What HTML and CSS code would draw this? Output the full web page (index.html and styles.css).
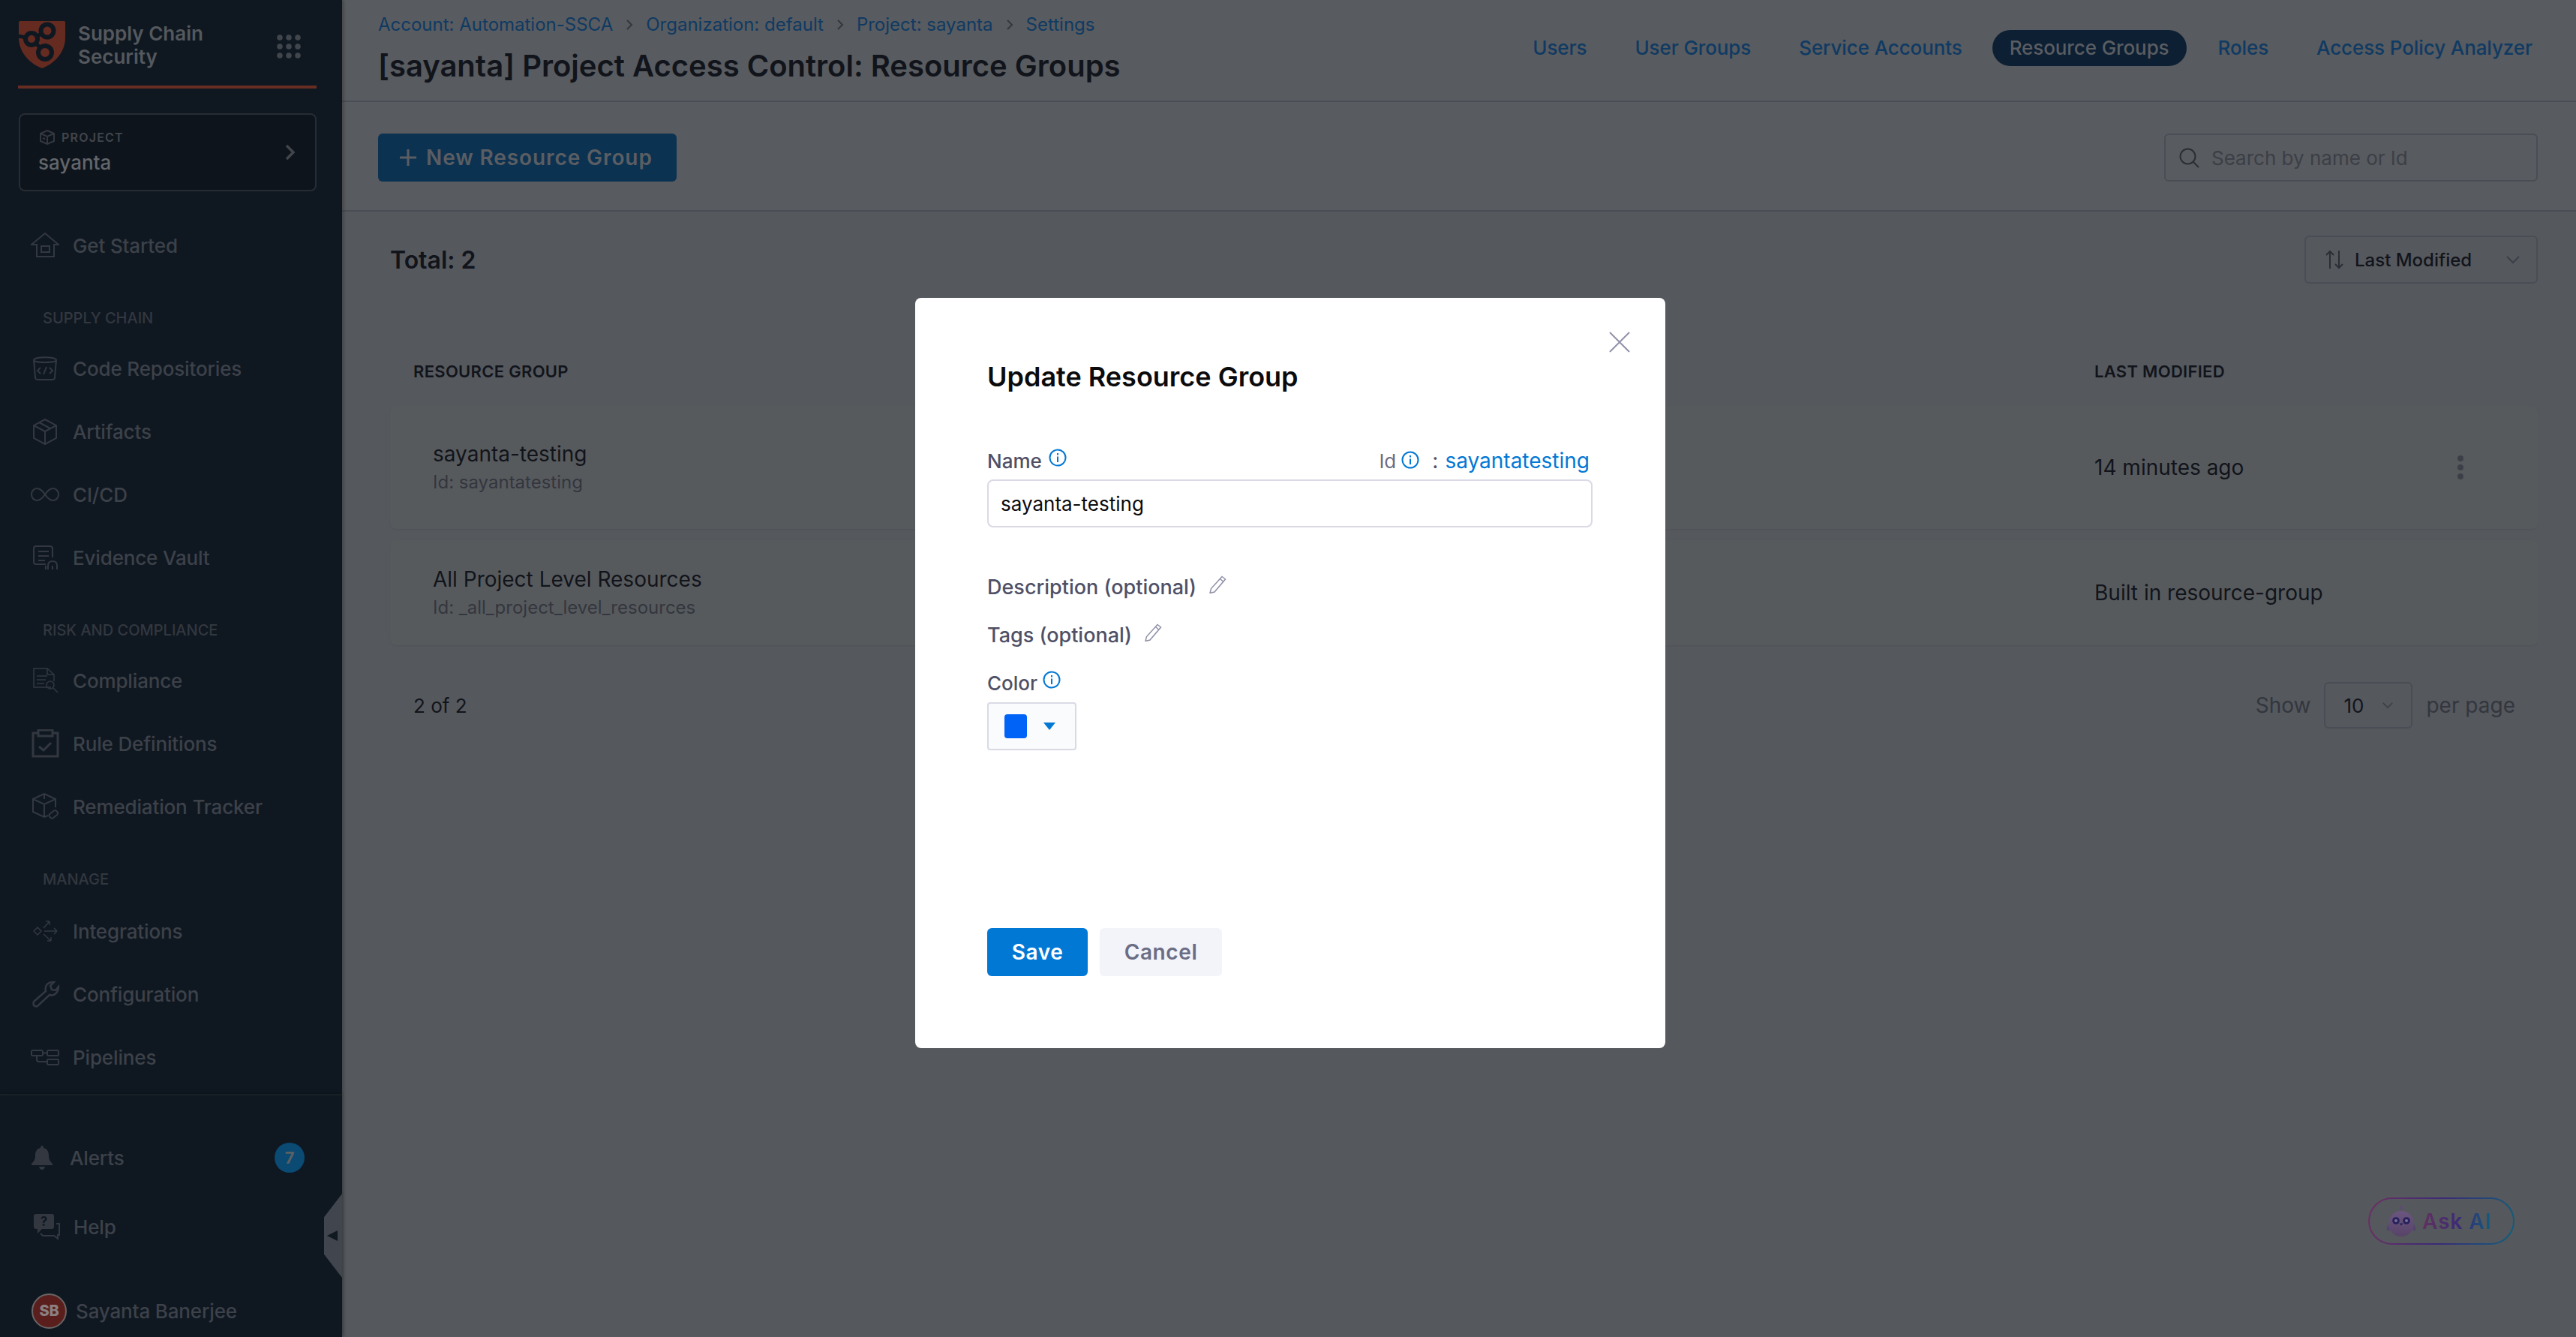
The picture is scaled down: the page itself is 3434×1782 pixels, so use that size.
FILE: index.html
```html
<!DOCTYPE html>
<html lang="en">
<head>
<meta charset="utf-8">
<title>Project Access Control: Resource Groups</title>
<link rel="stylesheet" href="styles.css">
</head>
<body>
<div class="app">
  <aside class="sidebar">
    <div class="brand">
      <svg class="logo" width="64" height="66" viewBox="25 27 64 66">
        <path class="logo-shield" d="M27 28H85Q87 28 87 30V50C87 70 72 85 56 91C40 85 25 70 25 50V30Q25 28 27 28Z"/>
        <path class="logo-line" d="M25 48L42 52M42 52L63 41M42 52L60 70"/>
        <circle class="logo-node" cx="63" cy="41" r="8.5"/>
        <circle class="logo-node" cx="42" cy="52" r="8"/>
        <circle class="logo-node" cx="60" cy="70" r="9"/>
      </svg>
      <div class="brand-name">Supply Chain<br>Security</div>
      <svg class="brand-grid" width="32" height="32" viewBox="0 0 32 32">
        <circle cx="4" cy="4" r="3.8"/><circle cx="16" cy="4" r="3.8"/><circle cx="28" cy="4" r="3.8"/>
        <circle cx="4" cy="16" r="3.8"/><circle cx="16" cy="16" r="3.8"/><circle cx="28" cy="16" r="3.8"/>
        <circle cx="4" cy="28" r="3.8"/><circle cx="16" cy="28" r="3.8"/><circle cx="28" cy="28" r="3.8"/>
      </svg>
    </div>
    <div class="project">
      <div class="project-text">
        <div class="project-label">
          <svg class="ico-line" width="20" height="20" viewBox="0 0 20 20"><path d="M10 1L19 5V15L10 19L1 15V5ZM1 5L10 9L19 5M10 9V19M4 11L7 12.5"/></svg>
          <span>PROJECT</span>
        </div>
        <div class="project-name">sayanta</div>
      </div>
      <svg class="project-arrow" width="14" height="22" viewBox="0 0 14 22"><path d="M2 2L11 11L2 20"/></svg>
    </div>
    <nav class="nav">
      <a class="nav-item"><svg class="ico-line" width="38" height="38" viewBox="0 0 38 38"><path d="M19 3L37 18H31V34H8V18H1ZM14 20H25V28H14Z"/></svg><span>Get Started</span></a>
      <div class="nav-heading">SUPPLY CHAIN</div>
      <a class="nav-item"><svg class="ico-line" width="38" height="38" viewBox="0 0 38 38"><path d="M4 8C4 3 34 3 34 8C34 12 4 12 4 8ZM4 8L6 31Q6 34 10 34H28Q32 34 32 31L34 8M13 18L9 22L13 26M25 18L29 22L25 26M21 17L17 27"/></svg><span>Code Repositories</span></a>
      <a class="nav-item"><svg class="ico-line" width="38" height="38" viewBox="0 0 38 38"><path d="M19 3L34 11V28L19 36L4 28V11ZM4 11L19 19L34 11M19 19V36M11 7L26 15"/></svg><span>Artifacts</span></a>
      <a class="nav-item"><svg class="ico-line" width="38" height="38" viewBox="0 0 38 38"><path d="M19 19C15 13 11 11 8 11C4 11 1 15 1 19C1 23 4 27 8 27C11 27 15 25 19 19C23 13 27 11 30 11C34 11 37 15 37 19C37 23 34 27 30 27C27 27 23 25 19 19Z"/></svg><span>CI/CD</span></a>
      <a class="nav-item"><svg class="ico-line" width="38" height="38" viewBox="0 0 38 38"><path d="M20 28H7Q4 28 4 25V7Q4 4 7 4H25Q29 4 29 7V19M10 11H24M10 17H24M10 23H19M23 35V30Q23 24 29 24Q35 24 35 30V35M29 30V35M20 30V35"/></svg><span>Evidence Vault</span></a>
      <div class="nav-heading">RISK AND COMPLIANCE</div>
      <a class="nav-item"><svg class="ico-line ico-thin" width="38" height="38" viewBox="0 0 38 38"><path d="M27 28H4V3H22L31 11V20M22 3V11H31M8 13H22M8 18H20M8 23H18"/><circle cx="26" cy="25" r="5"/><path d="M30 29L36 35"/></svg><span>Compliance</span></a>
      <a class="nav-item"><svg class="ico-thick" width="38" height="38" viewBox="0 0 38 38"><path d="M10 5H3V36H36V5H29M10 1H29V9H10ZM11 23L17 28L27 18"/></svg><span>Rule Definitions</span></a>
      <a class="nav-item"><svg class="ico-line" width="38" height="38" viewBox="0 0 38 38"><path d="M18 2L33 9V20M18 2L3 9V26L18 33L23 31M3 9L18 16L33 9M18 16V33M18 2V9"/><rect x="24" y="26" width="12" height="7" rx="3" transform="rotate(-38 30 29)"/></svg><span>Remediation Tracker</span></a>
      <div class="nav-heading nav-heading-last">MANAGE</div>
      <a class="nav-item"><svg class="ico-line ico-thin" width="38" height="38" viewBox="0 0 38 38"><path d="M6 14L11 19L6 24L1 19ZM14 15L22 6M22 6H17M22 6V11M15 19H32M32 19L28 15M32 19L28 23M14 23L24 32M24 32V27M24 32H19" transform="translate(3 0)"/></svg><span>Integrations</span></a>
      <a class="nav-item"><svg class="ico-line ico-wide" width="38" height="38" viewBox="0 0 38 38"><path d="M4 29L20 15C18 8 23 2 31 3L26 8L28 13L33 14L37 9C37 17 31 22 25 20L9 35Q6 36 4 34Q3 31 4 29Z"/></svg><span>Configuration</span></a>
      <a class="nav-item"><svg class="ico-line" width="38" height="38" viewBox="0 0 38 38"><rect x="1" y="10" width="15" height="7" rx="1.5"/><rect x="22" y="10" width="15" height="7" rx="1.5"/><rect x="22" y="22" width="15" height="7" rx="1.5"/><path d="M16 13.500H22M8 17V22Q8 25 11 25H22"/></svg><span>Pipelines</span></a>
    </nav>
    <div class="side-foot">
      <a class="foot-item foot-alerts">
        <svg class="ico-fill" width="28" height="32" viewBox="0 0 28 32"><path d="M14 0Q16 0 16 3C21 4 23 8 23 13C23 19 25 21 28 24V26H0V24C3 21 5 19 5 13C5 8 7 4 12 3Q12 0 14 0ZM10 28H18Q17 32 14 32Q11 32 10 28Z"/></svg>
        <span>Alerts</span>
        <b class="badge">7</b>
      </a>
      <a class="foot-item foot-help">
        <svg class="ico-fill ico-help" width="36" height="34" viewBox="0 0 36 34"><path d="M3 0H24Q27 0 27 3V17Q27 20 24 20H11L5 26V20H3Q0 20 0 17V3Q0 0 3 0Z"/><path class="help-outline" d="M30 13H34V28H32V33L27 29H12L9 26"/><text class="help-q" x="13.500" y="16" text-anchor="middle">?</text></svg>
        <span>Help</span>
      </a>
      <a class="foot-item foot-user">
        <span class="avatar">SB</span>
        <span>Sayanta Banerjee</span>
      </a>
    </div>
    <div class="collapse"><span class="collapse-arrow"></span></div>
  </aside>

  <main class="main">
    <header class="topbar">
      <div class="topbar-left">
        <div class="crumbs">
          <a>Account: Automation-SSCA</a><svg class="crumb-sep" width="10" height="16" viewBox="0 0 10 16"><path d="M2 2L8 8L2 14"/></svg>
          <a>Organization: default</a><svg class="crumb-sep" width="10" height="16" viewBox="0 0 10 16"><path d="M2 2L8 8L2 14"/></svg>
          <a>Project: sayanta</a><svg class="crumb-sep" width="10" height="16" viewBox="0 0 10 16"><path d="M2 2L8 8L2 14"/></svg>
          <a>Settings</a>
        </div>
        <h1 class="page-title">[sayanta] Project Access Control: Resource Groups</h1>
      </div>
      <nav class="tabs">
        <a class="tab">Users</a>
        <a class="tab">User Groups</a>
        <a class="tab">Service Accounts</a>
        <a class="tab tab-active">Resource Groups</a>
        <a class="tab">Roles</a>
        <a class="tab">Access Policy Analyzer</a>
      </nav>
    </header>

    <section class="toolbar">
      <button class="btn-new"><svg width="24" height="24" viewBox="0 0 24 24"><path d="M12 1V23M1 12H23"/></svg>New Resource Group</button>
      <div class="search">
        <svg width="28" height="28" viewBox="0 0 28 28"><circle cx="12.500" cy="12.500" r="10"/><path d="M20 20L27 27"/></svg>
        <span>Search by name or Id</span>
      </div>
    </section>

    <section class="content">
      <div class="total-row">
        <div class="total">Total: 2</div>
        <div class="sort">
          <svg class="sort-ico" width="26" height="26" viewBox="0 0 26 26"><path d="M7 25V2M2 7L7 2L12 7M19 1V24M14 19L19 24L24 19"/></svg>
          <span class="sort-text">Last Modified</span>
          <svg class="chev" width="18" height="12" viewBox="0 0 18 12"><path d="M1 2L9 10L17 2"/></svg>
        </div>
      </div>
      <div class="thead">
        <div>RESOURCE GROUP</div>
        <div>LAST MODIFIED</div>
      </div>
      <div class="row row-tall">
        <div class="row-name">
          <div class="rg-name">sayanta-testing</div>
          <div class="rg-id">Id: sayantatesting</div>
        </div>
        <div class="row-last">
          <span>14 minutes ago</span>
          <svg class="kebab" width="8" height="32" viewBox="0 0 8 32"><circle cx="4" cy="4" r="4"/><circle cx="4" cy="16" r="4"/><circle cx="4" cy="28" r="4"/></svg>
        </div>
      </div>
      <div class="row">
        <div class="row-name">
          <div class="rg-name">All Project Level Resources</div>
          <div class="rg-id">Id: _all_project_level_resources</div>
        </div>
        <div class="row-last"><span>Built in resource-group</span></div>
      </div>
      <div class="pager">
        <div class="pager-count">2 of 2</div>
        <div class="pager-size">
          <span>Show</span>
          <div class="size-select"><b>10</b><svg class="chev" width="18" height="12" viewBox="0 0 18 12"><path d="M1 2L9 10L17 2"/></svg></div>
          <span>per page</span>
        </div>
      </div>
      <div class="ask-wrap">
        <div class="ask">
          <svg width="40" height="42" viewBox="0 0 40 42">
            <defs><linearGradient id="botfill" x1="0" y1="0" x2="0" y2="1"><stop offset="0" stop-color="#6b5680"/><stop offset="1" stop-color="#584368"/></linearGradient></defs>
            <path class="bot-wing" d="M3 25Q0 30 1 33H8V21ZM37 25Q40 30 39 33H32V21Z"/>
            <circle class="bot-ant" cx="20" cy="2.500" r="2"/><path class="bot-antline" d="M20 3V8"/>
            <circle cx="20" cy="24" r="17" fill="url(#botfill)"/>
            <circle class="bot-eye" cx="13" cy="20" r="4.800"/><circle class="bot-eye" cx="27" cy="20" r="4.800"/>
            <circle class="bot-pupil" cx="13" cy="20" r="2"/><circle class="bot-pupil" cx="27" cy="20" r="2"/>
            <path class="bot-eye" d="M17.500 23.500H22.500L20 26.500Z"/>
          </svg>
          <span class="ask-text">Ask AI</span>
        </div>
      </div>
    </section>
  </main>
</div>

<div class="backdrop">
  <div class="modal">
    <svg class="modal-close" width="28" height="28" viewBox="0 0 28 28"><path d="M1 1L27 27M27 1L1 27"/></svg>
    <h2 class="modal-title">Update Resource Group</h2>
    <div class="name-row">
      <div class="field-label">Name
        <svg class="info info-up" width="24" height="24" viewBox="0 0 24 24"><circle cx="12" cy="12" r="10.500"/><path d="M12 10.500V18M12 6V8.500"/></svg>
      </div>
      <div class="id-block">
        <span class="id-label">Id</span>
        <svg class="info" width="24" height="24" viewBox="0 0 24 24"><circle cx="12" cy="12" r="10.500"/><path d="M12 10.500V18M12 6V8.500"/></svg>
        <span class="id-colon">:</span>
        <span class="id-value">sayantatesting</span>
      </div>
    </div>
    <div class="name-input">sayanta-testing</div>
    <div class="opt-row">Description (optional)
      <svg class="pencil" width="24" height="24" viewBox="0 0 24 24"><path d="M18 1.500L22.500 5L8 22L2 23.500L3.500 17.500ZM15.500 4.500L20 8.500"/></svg>
    </div>
    <div class="opt-row">Tags (optional)
      <svg class="pencil" width="24" height="24" viewBox="0 0 24 24"><path d="M18 1.500L22.500 5L8 22L2 23.500L3.500 17.500ZM15.500 4.500L20 8.500"/></svg>
    </div>
    <div class="opt-row color-row">Color
      <svg class="info info-up" width="24" height="24" viewBox="0 0 24 24"><circle cx="12" cy="12" r="10.500"/><path d="M12 10.500V18M12 6V8.500"/></svg>
    </div>
    <div class="color-btn"><span class="swatch"></span><span class="caret"></span></div>
    <div class="modal-actions">
      <button class="btn-save">Save</button>
      <button class="btn-cancel">Cancel</button>
    </div>
  </div>
</div>
</body>
</html>
```
FILE: styles.css
```css
* { box-sizing: border-box; }
html, body { margin: 0; height: 100%; }
body {
  font-family: Inter, "Noto Sans", sans-serif;
  background: #55585d;
  color: #11141b;
  overflow: hidden;
}
a { display: block; }
button { font-family: inherit; border: 0; cursor: pointer; }
svg { display: block; flex: none; fill: none; }

.app { display: grid; grid-template-columns: 456px 1fr; height: 1782px; }

/* Sidebar */
.sidebar {
  position: relative;
  display: flex;
  flex-direction: column;
  background: #0f1821;
  box-shadow: 3px 0 3px rgba(0, 0, 0, .18);
  z-index: 1;
}
.brand {
  display: flex;
  align-items: flex-start;
  height: 118px;
  margin: 0 34px 0 24px;
  padding: 27px 0 0 1px;
  border-bottom: 4px solid #672d23;
}
.logo-shield { fill: #652b21; }
.logo-line { stroke: #0f1821; stroke-width: 5; }
.logo-node { fill: #652b21; stroke: #0f1821; stroke-width: 6; }
.brand-name {
  margin: 2px 0 0 15px;
  font-size: 26px;
  line-height: 31px;
  font-weight: 600;
  color: #55585d;
  white-space: nowrap;
}
.brand-grid { margin: 19px 21px 0 auto; fill: #41454c; }

.project {
  display: flex;
  align-items: center;
  justify-content: space-between;
  width: 397px;
  height: 104px;
  margin: 33px 0 0 25px;
  padding: 0 26px 0 24px;
  background: #0e141b;
  border: 2px solid #272c33;
  border-radius: 8px;
}
.project-label {
  display: flex;
  align-items: center;
  gap: 9px;
  margin-left: 2px;
  font-size: 16px;
  line-height: 22px;
  font-weight: 600;
  letter-spacing: 1.200px;
  color: #41454c;
}
.project-name {
  margin-top: 6px;
  font-size: 26px;
  line-height: 34px;
  font-weight: 500;
  color: #63666b;
}
.project-arrow { stroke: #41454c; stroke-width: 3.500; }

.nav { display: flex; flex-direction: column; margin-top: 30px; }
.nav-item {
  display: flex;
  align-items: center;
  gap: 18px;
  height: 84px;
  padding-left: 41px;
  font-size: 26px;
  font-weight: 500;
  letter-spacing: -.15px;
  color: #3d4149;
}
.nav-heading {
  height: 80px;
  padding: 43px 0 0 57px;
  font-size: 20px;
  line-height: 24px;
  font-weight: 500;
  color: #33373f;
}
.nav-heading-last { height: 82px; }
.ico-line { stroke: #33373f; stroke-width: 2; }
.ico-thin { stroke-width: 1.500; }
.ico-wide { stroke-width: 2.500; }
.ico-thick { stroke: #33373f; stroke-width: 3; }
.ico-fill { fill: #33373f; }
.ico-help { overflow: visible; }
.help-outline { fill: none; stroke: #33373f; stroke-width: 2; }
.help-q { fill: #0f1821; font-size: 17px; font-weight: 700; }

.side-foot {
  flex: 1;
  margin-top: 7px;
  padding-top: 48px;
  border-top: 2px solid #191f27;
  box-shadow: 0 -2px 4px rgba(0, 0, 0, .2);
}
.foot-item {
  display: flex;
  align-items: center;
  font-size: 26px;
  font-weight: 500;
  letter-spacing: -.15px;
  color: #3d4149;
}
.foot-alerts { height: 70px; padding: 0 50px 0 42px; gap: 23px; }
.foot-help { height: 70px; margin-top: 22px; padding-left: 45px; gap: 17px; }
.foot-user { height: 50px; margin-top: 52px; padding-left: 42px; gap: 12px; }
.badge {
  margin-left: auto;
  width: 40px;
  height: 40px;
  border-radius: 50%;
  background: #0a4a73;
  color: #5c5f64;
  font-size: 22px;
  line-height: 40px;
  text-align: center;
}
.avatar {
  width: 47px;
  height: 47px;
  border-radius: 50%;
  background: #5a1f1d;
  border: 2px solid #6a6565;
  color: #8a8082;
  font-size: 20px;
  line-height: 43px;
  font-weight: 800;
  text-align: center;
}
.collapse {
  position: absolute;
  right: 0;
  top: 1591px;
  width: 24px;
  height: 112px;
  background: #41454d;
  clip-path: polygon(100% 0, 100% 100%, 0 72%, 0 28%);
}
.collapse-arrow {
  position: absolute;
  left: 4px;
  top: 49px;
  border-style: solid;
  border-width: 7px 14px 7px 0;
  border-color: transparent #101820 transparent transparent;
}

/* Main */
.main { display: flex; flex-direction: column; min-width: 0; }
.topbar {
  display: flex;
  justify-content: space-between;
  height: 136px;
  padding: 0 58px 0 48px;
  background: #585b5f;
  border-bottom: 2px solid #4a4d55;
}
.crumbs {
  display: flex;
  align-items: center;
  gap: 17px;
  height: 34px;
  margin-top: 16px;
  font-size: 24px;
  line-height: 34px;
  color: #0f3a63;
}
.crumb-sep { stroke: #33373f; stroke-width: 2; }
.page-title {
  margin: 14px 0 0;
  font-size: 40px;
  line-height: 48px;
  font-weight: 600;
  color: #11141b;
}
.tabs { display: flex; align-items: center; gap: 20px; height: 48px; margin-top: 40px; }
.tab {
  height: 48px;
  padding: 0 22px;
  border-radius: 24px;
  font-size: 26px;
  line-height: 48px;
  font-weight: 500;
  letter-spacing: -.1px;
  color: #0f3a63;
  white-space: nowrap;
}
.tab:last-child { padding-right: 0; }
.tab-active { margin-left: -2px; padding: 0 23px; background: #0d1f33; color: #5a5d62; }

.toolbar {
  display: flex;
  align-items: center;
  justify-content: space-between;
  height: 146px;
  padding: 4px 51px 0 48px;
  background: #585b5f;
  border-bottom: 2px solid #4a4d55;
}
.btn-new {
  display: flex;
  align-items: center;
  gap: 12px;
  height: 64px;
  width: 398px;
  padding: 0 0 0 28px;
  border-radius: 6px;
  background: #0c3252;
  color: #5a5d62;
  font-size: 28px;
  font-weight: 600;
  letter-spacing: .9px;
}
.btn-new svg { stroke: #5a5d62; stroke-width: 3; }
.search {
  display: flex;
  align-items: center;
  gap: 16px;
  width: 498px;
  height: 64px;
  padding-left: 17px;
  border: 2px solid #4a4d55;
  border-radius: 6px;
  font-size: 26px;
  color: #3c3f47;
}
.search svg { stroke: #2b2e35; stroke-width: 2; }

.content { position: relative; flex: 1; padding: 0 51px 0 64px; }
.total-row {
  display: flex;
  align-items: center;
  justify-content: space-between;
  height: 64px;
  margin-top: 32px;
}
.total { font-size: 32px; font-weight: 600; color: #11141b; }
.sort {
  display: flex;
  align-items: center;
  width: 311px;
  height: 64px;
  padding: 0 22px 0 25px;
  border: 2px solid #4a4d55;
  border-radius: 6px;
}
.sort-ico { stroke: #2b2e35; stroke-width: 2; }
.sort-text { margin-left: 14px; font-size: 24px; font-weight: 500; color: #11141b; }
.chev { stroke: #3c3f47; stroke-width: 2; margin-left: auto; }
.thead {
  display: grid;
  grid-template-columns: 2272px 1fr;
  margin-top: 103px;
  height: 28px;
  font-size: 22px;
  line-height: 28px;
  font-weight: 600;
  letter-spacing: .3px;
  color: #11141b;
}
.thead div:first-child { padding-left: 31px; }
.row {
  display: grid;
  grid-template-columns: 2272px 1fr;
  align-items: center;
  height: 140px;
  margin-top: 15px;
  border-radius: 8px;
  background: #575a5d;
  box-shadow: 0 1px 3px rgba(0, 0, 0, .06);
}
.row-tall { height: 164px; margin-top: 32px; }
.row-name { padding-left: 57px; }
.rg-name { font-size: 28px; line-height: 34px; color: #11141b; }
.rg-id { margin-top: 6px; font-size: 24px; line-height: 30px; color: #33363e; }
.row-last {
  display: flex;
  align-items: center;
  justify-content: space-between;
  padding-right: 99px;
  font-size: 28px;
  color: #11141b;
}
.kebab { fill: #3c3f47; }
.pager {
  display: flex;
  align-items: center;
  justify-content: space-between;
  height: 62px;
  margin-top: 49px;
  padding: 0 30px 0 31px;
}
.pager-count { font-size: 26px; color: #11141b; }
.pager-size { display: flex; align-items: center; gap: 18px; font-size: 28px; color: #33363e; }
.size-select {
  display: flex;
  align-items: center;
  width: 118px;
  height: 62px;
  padding: 0 24px;
  border: 2px solid #4a4d55;
  border-radius: 6px;
}
.size-select b { font-size: 26px; font-weight: 400; color: #11141b; }
.size-select .chev { width: 14px; height: 10px; }

.ask-wrap { position: absolute; right: 82px; top: 1314px; }
.ask {
  display: flex;
  align-items: center;
  gap: 8px;
  width: 195px;
  height: 63px;
  padding-left: 22px;
  border: 2px solid transparent;
  border-radius: 32px;
  background:
    linear-gradient(#55585d, #55585d) padding-box,
    linear-gradient(100deg, #6e2f63 0%, #3a2a78 50%, #0f5f7d 100%) border-box;
}
.ask-text {
  font-size: 28px;
  font-weight: 600;
  letter-spacing: 1px;
  background: linear-gradient(90deg, #62305f, #3a2a78 55%, #0f5f7d);
  -webkit-background-clip: text;
  background-clip: text;
  color: transparent;
}
.bot-wing { fill: #544470; }
.bot-ant { fill: #5f4a75; }
.bot-antline { stroke: #5f4a75; stroke-width: 2; }
.bot-eye { fill: #26215a; }
.bot-pupil { fill: #7d6f95; }

/* Modal */
.backdrop { position: fixed; inset: 0; z-index: 5; }
.modal {
  position: absolute;
  left: 1220px;
  top: 397px;
  display: flex;
  flex-direction: column;
  width: 1000px;
  height: 1000px;
  padding: 83px 97px 96px 96px;
  background: #fff;
  border-radius: 8px;
}
.modal-close {
  position: absolute;
  right: 47px;
  top: 45px;
  stroke: #9293ab;
  stroke-width: 2;
}
.modal-title {
  margin: 0;
  font-size: 36px;
  line-height: 44px;
  font-weight: 600;
  color: #0b0b0d;
}
.name-row {
  display: flex;
  align-items: center;
  justify-content: space-between;
  height: 40px;
  margin-top: 70px;
  padding-right: 4px;
}
.field-label, .opt-row {
  display: flex;
  align-items: center;
  font-size: 26px;
  font-weight: 500;
  color: #4f5066;
}
.info { stroke: #0278d5; stroke-width: 2; }
.info-up { margin: -8px 0 0 9px; }
.id-block { display: flex; align-items: center; font-size: 26px; }
.id-label { color: #6b6d85; }
.id-block .info { margin: -2px 0 0 7px; }
.id-colon { margin-left: 17px; color: #4f5066; font-size: 28px; }
.id-value { margin-left: 9px; font-size: 28px; color: #0278d5; }
.name-input {
  height: 64px;
  margin-top: 5px;
  padding: 0 16px;
  border: 2px solid #d9dae5;
  border-radius: 8px;
  font-size: 26px;
  line-height: 62px;
  color: #0b0b0d;
}
.opt-row { height: 32px; margin-top: 32px; font-size: 27px; }
.name-input + .opt-row { margin-top: 63px; }
.color-row { font-size: 26px; }
.color-row .info-up { margin-left: 7px; }
.pencil { margin: -6px 0 0 16px; stroke: #8e8fa6; stroke-width: 1.500; }
.color-btn {
  display: flex;
  align-items: center;
  width: 119px;
  height: 64px;
  margin-top: 10px;
  padding-left: 21px;
  background: #fafbfc;
  border: 2px solid #d9dae5;
  border-radius: 4px;
}
.swatch { width: 30px; height: 32px; border-radius: 4px; background: #0063f7; }
.caret {
  margin-left: 22px;
  border-style: solid;
  border-width: 10px 8px 0;
  border-color: #0278d5 transparent transparent;
}
.modal-actions { display: flex; gap: 16px; margin-top: auto; }
.btn-save, .btn-cancel {
  height: 64px;
  border-radius: 6px;
  font-size: 28px;
  font-weight: 600;
  letter-spacing: .6px;
}
.btn-save { width: 134px; background: #0278d5; color: #fff; }
.btn-cancel { width: 163px; background: #f3f3fa; color: #6b6d85; }
```
